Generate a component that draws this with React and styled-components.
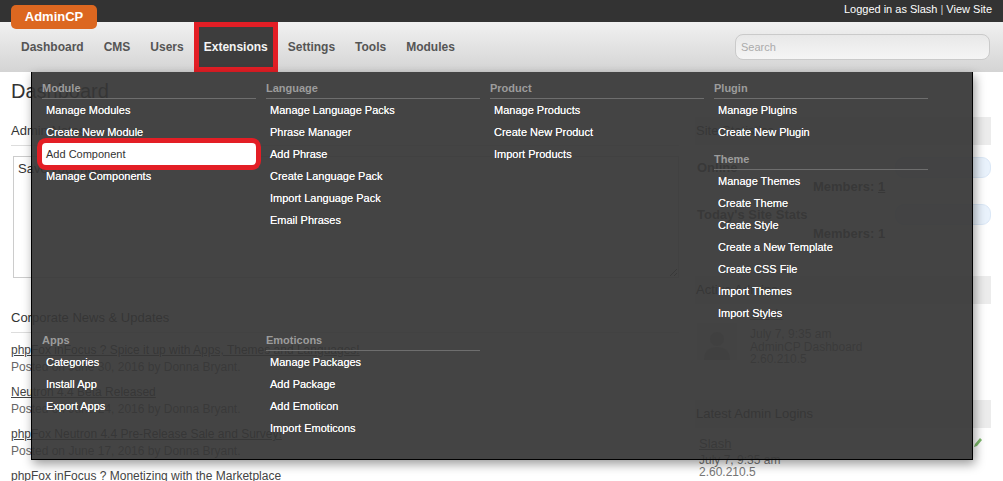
import styled, { createGlobalStyle } from 'styled-components';

const GlobalStyle = createGlobalStyle`
  html, body {
    margin: 0;
    padding: 0;
    background: #fff;
    font-family: "Liberation Sans", Arial, sans-serif;
    color: #333;
  }
  * { box-sizing: border-box; }
`;

const Header = styled.header`
  position: relative;
  z-index: 5;
`;

const TopBar = styled.div`
  height: 22px;
  background: #333;
  display: flex;
  align-items: flex-start;
  justify-content: space-between;
  padding: 0 11px;
`;

const Logo = styled.div`
  position: relative;
  z-index: 2;
  margin-top: 5px;
  width: 86px;
  height: 24px;
  border-radius: 5px;
  background: #dc6720;
  color: #fff;
  font-size: 13px;
  font-weight: bold;
  line-height: 24px;
  text-align: center;
`;

const UserLinks = styled.div`
  font-size: 11px;
  line-height: 18px;
  color: #fff;

  a { color: #fff; text-decoration: none; }
  span { color: #ccc; margin: 0 3px; }
`;

const NavBar = styled.nav`
  height: 50px;
  background: linear-gradient(#f1f1f1, #d4d4d4);
  display: flex;
  align-items: stretch;
  padding-left: 11px;
`;

const NavItem = styled.a`
  display: block;
  padding: 0 10px;
  line-height: 50px;
  font-size: 12px;
  font-weight: bold;
  color: ${p => (p.$active ? '#f4f4f4' : '#555')};
  background: ${p => (p.$active ? '#3d3d3d' : 'transparent')};
  box-shadow: ${p => (p.$active ? 'inset 0 0 0 5px #e31e25' : 'none')};
  text-decoration: none;
`;

const Search = styled.input`
  align-self: center;
  margin: 0 13px 0 auto;
  width: 255px;
  height: 26px;
  border: 1px solid #cacaca;
  border-radius: 8px;
  background: linear-gradient(#e8e8e8, #f5f5f5);
  padding: 0 5px;
  font-family: inherit;
  font-size: 11px;
  color: #333;
  outline: none;

  &::placeholder { color: #ababab; }
`;

const Dropdown = styled.div`
  position: absolute;
  top: 100%;
  left: 31px;
  width: 942px;
  height: 388px;
  background: rgba(54, 54, 54, 0.93);
  border: 1px solid #000;
  border-top: 0;
  box-shadow: 2px 4px 10px rgba(0, 0, 0, 0.4);
  padding: 6px 0 0 10px;
  display: grid;
  grid-template-columns: repeat(4, 214px);
  column-gap: 10px;
  align-content: start;
  align-items: start;
`;

const Section = styled.div`
  margin-bottom: 6px;
`;

const SectionTitle = styled.div`
  height: 21px;
  line-height: 20px;
  font-size: 11px;
  font-weight: bold;
  color: #9c9c9c;
  border-bottom: 1px solid ${p => (p.$plain ? 'transparent' : '#6e6e6e')};
`;

const MenuLink = styled.a`
  display: block;
  position: relative;
  height: 22px;
  line-height: 22px;
  padding-left: 4px;
  font-size: 11px;
  color: ${p => (p.$marked ? '#333' : '#fff')};
  background: ${p => (p.$marked ? '#fff' : 'transparent')};
  border-radius: ${p => (p.$marked ? '4px' : '0')};
  box-shadow: ${p => (p.$marked ? '0 0 0 5px #e31e25' : 'none')};
  text-shadow: ${p => (p.$marked ? 'none' : '0 0 0.4px rgba(255, 255, 255, 0.8)')};
  text-decoration: none;
`;

const Main = styled.main`
  display: flex;
  gap: 16px;
  padding: 0 12px 0 11px;
`;

const LeftCol = styled.div`
  width: 668px;
`;

const RightCol = styled.div`
  flex: 1;
`;

const PageTitle = styled.h1`
  margin: 0;
  padding-top: 7px;
  font-size: 20px;
  font-weight: normal;
  line-height: 24px;
  color: #333;
`;

const BlockTitle = styled.h3`
  margin: ${p => p.$top || 20}px 0 0;
  padding-bottom: 6px;
  font-size: 13px;
  font-weight: normal;
  line-height: 16px;
  color: #333;
  border-bottom: 1px solid #ddd;
`;

const Notes = styled.textarea`
  display: block;
  margin: 10px 0 0 2px;
  width: 666px;
  height: 122px;
  border: 1px solid #ccc;
  padding: 4px 4px;
  font-family: inherit;
  font-size: 13px;
  line-height: 16px;
  color: #333;
  resize: vertical;
`;

const NewsList = styled.div`
  padding-top: 9px;
`;

const NewsItem = styled.div`
  margin-bottom: 8px;
  font-size: 12px;
  line-height: 17px;
`;

const NewsLink = styled.a`
  color: #444;
  text-decoration: ${p => (p.$plain ? 'none' : 'underline')};
`;

const Posted = styled.div`
  color: #666;
`;

const PanelTitle = styled.div`
  margin-top: ${p => p.$top}px;
  height: 28px;
  line-height: 28px;
  padding-left: 1px;
  background: #ececec;
  font-size: 13px;
  color: #444;
`;

const StatHead = styled.div`
  display: flex;
  justify-content: space-between;
  align-items: center;
  height: 21px;
  margin-top: ${p => p.$top}px;
  padding-left: 2px;
  font-size: 13px;
  font-weight: bold;
  color: #555;
`;

const Pill = styled.div`
  width: 96px;
  height: 21px;
  border-radius: 9px;
  background: #e9f2fc;
  border: 1px solid #dbe8f7;
`;

const StatValue = styled.div`
  padding-left: 118px;
  font-size: 13px;
  font-weight: bold;
  line-height: 18px;
  color: #555;

  a { color: #555; }
`;

const AdminEntry = styled.div`
  display: flex;
  gap: 13px;
  margin-top: 3px;
  padding-left: 2px;
`;

const Avatar = styled.div`
  margin-top: 16px;
  width: 40px;
  height: 37px;
  background: #e6e6e6;
  display: flex;
  align-items: flex-end;
  justify-content: center;
  overflow: hidden;
`;

const EntryText = styled.div`
  font-size: 12px;
  line-height: 12.5px;
  color: #777;
`;

const EntryName = styled.a`
  display: block;
  font-size: 13px;
  line-height: 14px;
  margin-bottom: ${p => p.$gap}px;
  color: #666;
  text-decoration: underline;
`;

const LoginRow = styled.div`
  display: flex;
  justify-content: space-between;
  align-items: flex-start;
  margin-top: 9px;
  padding: 0 8px 0 4px;
`;

const menu = [
  [{ title: 'Module', items: ['Manage Modules', 'Create New Module', { label: 'Add Component', marked: true }, 'Manage Components'] }],
  [{ title: 'Language', items: ['Manage Language Packs', 'Phrase Manager', 'Add Phrase', 'Create Language Pack', 'Import Language Pack', 'Email Phrases'] }],
  [{ title: 'Product', items: ['Manage Products', 'Create New Product', 'Import Products'] }],
  [
    { title: 'Plugin', items: ['Manage Plugins', 'Create New Plugin'] },
    { title: 'Theme', items: ['Manage Themes', 'Create Theme', 'Create Style', 'Create a New Template', 'Create CSS File', 'Import Themes', 'Import Styles'] },
  ],
  [{ title: 'Apps', plain: true, items: ['Categories', 'Install App', 'Export Apps'] }],
  [{ title: 'Emoticons', items: ['Manage Packages', 'Add Package', 'Add Emoticon', 'Import Emoticons'] }],
];

const navItems = ['Dashboard', 'CMS', 'Users', 'Extensions', 'Settings', 'Tools', 'Modules'];

const news = [
  { title: 'phpFox inFocus ? Spice it up with Apps, Themes and Languages!', posted: 'Posted on June 30, 2016 by Donna Bryant.' },
  { title: 'Neutron 4.4 Beta Released', posted: 'Posted on June 24, 2016 by Donna Bryant.' },
  { title: 'phpFox Neutron 4.4 Pre-Release Sale and Survey!', posted: 'Posted on June 17, 2016 by Donna Bryant.' },
  { title: 'phpFox inFocus ? Monetizing with the Marketplace', posted: 'Posted on June 10, 2016 by Donna Bryant.' },
];

const ExtensionsMenu = () => (
  <Dropdown>
    {menu.map((column, i) => (
      <div key={i}>
        {column.map(section => (
          <Section key={section.title}>
            <SectionTitle $plain={section.plain}>{section.title}</SectionTitle>
            {section.items.map(item => {
              const label = typeof item === 'string' ? item : item.label;
              return (
                <MenuLink key={label} href="#" $marked={item.marked}>
                  {label}
                </MenuLink>
              );
            })}
          </Section>
        ))}
      </div>
    ))}
  </Dropdown>
);

const App = () => (
  <>
    <GlobalStyle />
    <Header>
      <TopBar>
        <Logo>AdminCP</Logo>
        <UserLinks>
          <a href="#">Logged in as Slash</a>
          <span>|</span>
          <a href="#">View Site</a>
        </UserLinks>
      </TopBar>
      <NavBar>
        {navItems.map(item => (
          <NavItem key={item} href="#" $active={item === 'Extensions'}>
            {item}
          </NavItem>
        ))}
        <Search placeholder="Search" />
      </NavBar>
      <ExtensionsMenu />
    </Header>

    <Main>
      <LeftCol>
        <PageTitle>Dashboard</PageTitle>
        <BlockTitle>Admin Notes</BlockTitle>
        <Notes defaultValue="Save your notes here..." />
        <BlockTitle $top={32}>Corporate News &amp; Updates</BlockTitle>
        <NewsList>
          {news.map((n, i) => (
            <NewsItem key={n.title}>
              <NewsLink href="#" $plain={i === news.length - 1}>{n.title}</NewsLink>
              <Posted>{n.posted}</Posted>
            </NewsItem>
          ))}
        </NewsList>
      </LeftCol>

      <RightCol>
        <PanelTitle $top={45}>Site Statistics</PanelTitle>
        <StatHead $top={12}>
          Online
          <Pill />
        </StatHead>
        <StatValue>
          Members: <a href="#">1</a>
        </StatValue>
        <StatHead $top={8}>
          Today's Site Stats
          <Pill />
        </StatHead>
        <StatValue>Members: 1</StatValue>

        <PanelTitle $top={33}>Active Admins</PanelTitle>
        <AdminEntry>
          <Avatar>
            <svg width="30" height="32" viewBox="0 0 30 32">
              <circle cx="15" cy="11" r="7" fill="#c4c4c4" />
              <path d="M2 32 C2 22 8 19 15 19 C22 19 28 22 28 32 Z" fill="#c4c4c4" />
            </svg>
          </Avatar>
          <EntryText>
            <EntryName href="#" $gap={7}>Slash</EntryName>
            <div>July 7, 9:35 am</div>
            <div>AdminCP Dashboard</div>
            <div>2.60.210.5</div>
          </EntryText>
        </AdminEntry>

        <PanelTitle $top={34}>Latest Admin Logins</PanelTitle>
        <LoginRow>
          <EntryText>
            <EntryName href="#" $gap={3}>Slash</EntryName>
            <div>July 7, 9:35 am</div>
            <div>2.60.210.5</div>
          </EntryText>
          <svg width="10" height="11" viewBox="0 0 10 11">
            <path d="M1 10 L2 7 L7 1 L9 3 L4 9 Z" fill="#7cb86a" />
          </svg>
        </LoginRow>
      </RightCol>
    </Main>
  </>
);

export default App;
